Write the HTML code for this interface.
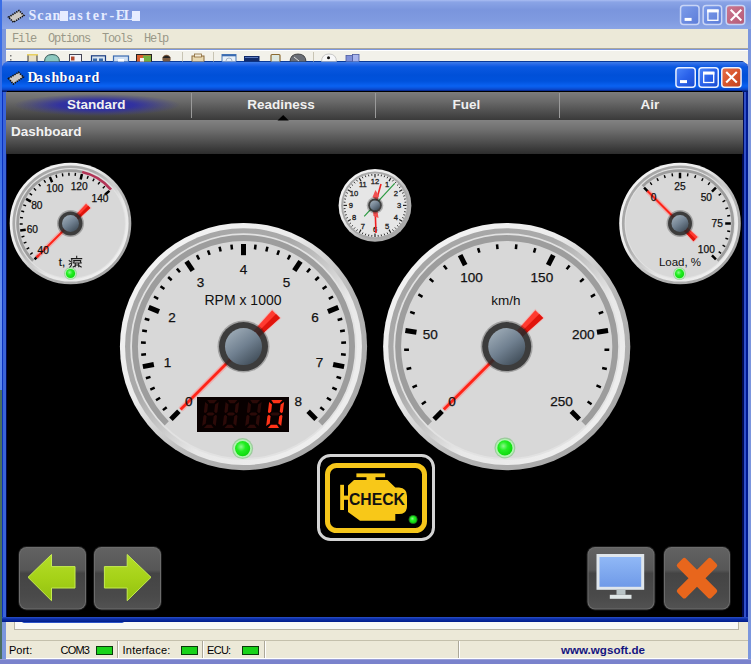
<!DOCTYPE html>
<html><head><meta charset="utf-8">
<style>
*{margin:0;padding:0;box-sizing:border-box}
html,body{width:751px;height:664px;overflow:hidden;background:#7b96dd}
body{position:relative;font-family:"Liberation Sans",sans-serif}
.abs{position:absolute}
#otitle{left:0;top:0;width:751px;height:29px;background:linear-gradient(#a9bdf2 0,#8aa4e6 2px,#7a95dd 10px,#7f9ae0 20px,#8ba5e6 29px)}
#ttext{left:28.5px;top:9px;font-family:"Liberation Serif",serif;font-weight:bold;font-size:14px;color:#e6ecff;letter-spacing:0;white-space:pre;line-height:14px}
.blk{display:inline-block;width:7.95px;height:10px;border-left:0.5px solid transparent;background-clip:content-box;background:#e6ecff;vertical-align:-1px}
#menu{left:6px;top:29px;width:742px;height:20px;background:#ece9d8;border-bottom:1px solid #aca899}
#mtext{left:12px;top:32px;font-family:"Liberation Mono",monospace;font-size:12px;letter-spacing:-1.2px;color:#9a9888;white-space:pre;line-height:14px}
#tool{left:6px;top:50px;width:742px;height:14px;background:#f2f1ea;border-top:1px solid #fff}
#dash{left:2px;top:61px;width:746px;height:561px;background:linear-gradient(90deg,#0a30c0 0,#0a30c0 1.5px,#3a64d8 1.5px,#3a64d8 4px,#000a50 4px,#000a50 5px,#3a64d8 5px,#3a64d8 739.5px,#000a50 739.5px,#000a50 742px,#3050c8 742px,#3050c8 744px,#001a90 744px);border-radius:8px 8px 0 0}
#dbot{left:2px;top:617px;width:746px;height:5px;background:linear-gradient(#2a50c8 0,#0c2ea8 2px,#001c88 5px)}
#dtitle{left:2px;top:61px;width:746px;height:31px;border-radius:8px 8px 0 0;background:linear-gradient(#0a3a9a 0,#0a3a9a 1px,#3a7ae8 1.5px,#2a6ae8 3px,#0a58e0 6px,#0050d8 14px,#0052dc 20px,#0a62f2 25px,#0a56e0 27px,#0a40c0 29px,#001a70 30px,#001a70 31px)}
#dtt{left:27.5px;top:71px;font-family:"Liberation Serif",serif;font-weight:bold;font-size:14px;color:#fff;white-space:pre;line-height:14px;text-shadow:1px 1px 0 #0a2a90}
#content{left:7px;top:91px;width:734.5px;height:526px;background:#000;overflow:hidden}
#tabs{left:6px;top:92px;width:737px;height:28px;background:linear-gradient(#7c7c7c 0,#6a6a6a 9px,#4e4e4e 20px,#3a3a3a 28px)}
.sep{top:93px;width:1px;height:25px;background:#9a9a9a}
.tab{top:98px;height:14px;white-space:nowrap;font-weight:bold;font-size:13.5px;color:#f0f0f0;line-height:14px}
#glow{left:14px;top:94px;width:166px;height:22px;border-radius:50%;background:radial-gradient(ellipse closest-side at center,rgba(38,38,175,0.95) 0,rgba(42,42,170,0.85) 45%,rgba(55,55,150,0.35) 80%,rgba(60,60,150,0) 100%)}
#hdr{left:6px;top:120px;width:737px;height:34px;background:linear-gradient(#828282 0,#6e6e6e 10px,#4e4e4e 22px,#2c2c2c 34px)}
#htext{left:11px;top:125px;font-weight:bold;font-size:13.5px;color:#f2f2f2;line-height:14px}
#below{left:6px;top:622px;width:742px;height:37px;background:#ece9d8}
#wpanel{left:14px;top:621px;width:725px;height:9px;background:#f8f8f6;border:1px solid #b8b4a4;border-top:none}
#status{left:6px;top:640px;width:742px;height:19px;background:#ece9d8;border-top:1px solid #c4c0ac;border-bottom:1px solid #fff}
.st{top:644px;font-size:11px;color:#000;line-height:12px;white-space:pre}
.gbox{top:646px;width:17px;height:9px;background:#19d219;border:1px solid #0a3a0a}
.vsep{top:641px;width:2px;height:17px;border-left:1px solid #aca899;border-right:1px solid #fff}
#bottom{left:0;top:659px;width:751px;height:5px;background:#7a82cc;border-top:1px solid #9aa0d8}
svg{position:absolute;left:0;top:0}
</style></head><body>
<div class="abs" id="otitle"></div>
<div class="abs" style="left:0;top:0;width:2px;height:390px;background:linear-gradient(#3a6ee6 0,#3a6ee6 150px,#6a92ee 300px,#5a86ec 390px)"></div>
<div class="abs" style="left:0;top:390px;width:2px;height:274px;background:#4a7060"></div>
<div class="abs" id="ttext"><span style="display:inline-block;width:7.95px;text-align:center">S</span><span style="display:inline-block;width:7.95px;text-align:center">c</span><span style="display:inline-block;width:7.95px;text-align:center">a</span><span style="display:inline-block;width:7.95px;text-align:center">n</span><span class="blk"></span><span style="display:inline-block;width:7.95px;text-align:center">a</span><span style="display:inline-block;width:7.95px;text-align:center">s</span><span style="display:inline-block;width:7.95px;text-align:center">t</span><span style="display:inline-block;width:7.95px;text-align:center">e</span><span style="display:inline-block;width:7.95px;text-align:center">r</span><span style="display:inline-block;width:7.95px;text-align:center">-</span><span style="display:inline-block;width:7.95px;text-align:center">E</span><span style="display:inline-block;width:7.95px;text-align:center">L</span><span class="blk"></span></div>
<div class="abs" id="menu"></div>
<div class="abs" id="mtext">File  Options  Tools  Help</div>
<div class="abs" id="tool"></div>
<div class="abs" id="below"></div>
<div class="abs" id="wpanel"></div>
<div class="abs" id="status"></div>
<div class="abs st" style="left:9px">Port:</div>
<div class="abs st" style="left:60.5px;letter-spacing:-0.8px">COM3</div>
<div class="abs gbox" style="left:96px"></div>
<div class="abs vsep" style="left:117px"></div>
<div class="abs st" style="left:122.6px;letter-spacing:0.2px">Interface:</div>
<div class="abs gbox" style="left:181px"></div>
<div class="abs vsep" style="left:202px"></div>
<div class="abs st" style="left:207px;letter-spacing:-0.7px">ECU:</div>
<div class="abs gbox" style="left:242px"></div>
<div class="abs vsep" style="left:264px"></div>
<div class="abs vsep" style="left:458px"></div>
<div class="abs st" style="left:561px;font-weight:bold;color:#141480;font-size:11.6px">www.wgsoft.de</div>
<div class="abs" id="bottom"></div>
<div class="abs" style="left:22px;top:620px;width:102px;height:3px;background:#2a52c8;border-radius:0 0 2px 2px"></div>
<div class="abs" id="dash"></div>
<div class="abs" id="dbot"></div>
<div class="abs" id="dtitle"></div>
<div class="abs" id="dtt"><span style="display:inline-block;width:8.0px;text-align:center">D</span><span style="display:inline-block;width:8.0px;text-align:center">a</span><span style="display:inline-block;width:8.0px;text-align:center">s</span><span style="display:inline-block;width:8.0px;text-align:center">h</span><span style="display:inline-block;width:8.0px;text-align:center">b</span><span style="display:inline-block;width:8.0px;text-align:center">o</span><span style="display:inline-block;width:8.0px;text-align:center">a</span><span style="display:inline-block;width:8.0px;text-align:center">r</span><span style="display:inline-block;width:8.0px;text-align:center">d</span></div>
<div class="abs" id="content"></div>
<div class="abs" id="tabs"></div>
<div class="abs" id="glow"></div>
<div class="abs sep" style="left:191px"></div>
<div class="abs sep" style="left:375px"></div>
<div class="abs sep" style="left:559px"></div>
<div class="abs tab" style="left:67px">Standard</div>
<div class="abs tab" style="left:247.3px">Readiness</div>
<div class="abs tab" style="left:452.4px">Fuel</div>
<div class="abs tab" style="left:640.5px">Air</div>
<div class="abs" id="hdr"></div>
<div class="abs" id="htext">Dashboard</div>
<svg width="751" height="664" viewBox="0 0 751 664" font-family="Liberation Sans, sans-serif">
<defs>
<linearGradient id="rimA" x1="0" y1="0" x2="1" y2="1"><stop offset="0" stop-color="#f6f6f6"/><stop offset="0.38" stop-color="#ececec"/><stop offset="0.62" stop-color="#b4b4b4"/><stop offset="1" stop-color="#a2a2a2"/></linearGradient>
<linearGradient id="rimB" x1="0" y1="0" x2="1" y2="1"><stop offset="0" stop-color="#a4a4a4"/><stop offset="0.38" stop-color="#aaaaaa"/><stop offset="0.62" stop-color="#e8e8e8"/><stop offset="1" stop-color="#f2f2f2"/></linearGradient>
<linearGradient id="ball" x1="0.2" y1="0.1" x2="0.8" y2="0.9"><stop offset="0" stop-color="#98a6b2"/><stop offset="0.5" stop-color="#708090"/><stop offset="1" stop-color="#45525e"/></linearGradient>
<linearGradient id="btn" x1="0" y1="0" x2="0" y2="1"><stop offset="0" stop-color="#626262"/><stop offset="0.36" stop-color="#575757"/><stop offset="0.42" stop-color="#444444"/><stop offset="0.8" stop-color="#4a4a4a"/><stop offset="1" stop-color="#525252"/></linearGradient>
<linearGradient id="arr" x1="0" y1="0" x2="0" y2="1"><stop offset="0" stop-color="#b4de2a"/><stop offset="0.5" stop-color="#a6d218"/><stop offset="1" stop-color="#92c010"/></linearGradient>
<linearGradient id="scr" x1="0" y1="0" x2="0" y2="1"><stop offset="0" stop-color="#90b8f6"/><stop offset="1" stop-color="#6f9ae8"/></linearGradient>
<linearGradient id="wbA" x1="0" y1="0" x2="1" y2="1"><stop offset="0" stop-color="#4c86fa"/><stop offset="0.5" stop-color="#2a62ea"/><stop offset="1" stop-color="#1a4cd0"/></linearGradient>
<linearGradient id="wbX" x1="0" y1="0" x2="1" y2="1"><stop offset="0" stop-color="#e8704a"/><stop offset="0.5" stop-color="#d8552c"/><stop offset="1" stop-color="#c04020"/></linearGradient>
<linearGradient id="wbI" x1="0" y1="0" x2="1" y2="1"><stop offset="0" stop-color="#7c9cea"/><stop offset="1" stop-color="#5c7cd8"/></linearGradient>
<linearGradient id="wbIX" x1="0" y1="0" x2="1" y2="1"><stop offset="0" stop-color="#cc7890"/><stop offset="1" stop-color="#b45a76"/></linearGradient>
<radialGradient id="ledg" cx="0.4" cy="0.38" r="0.65"><stop offset="0" stop-color="#8cf88c"/><stop offset="0.45" stop-color="#22ee22"/><stop offset="1" stop-color="#0cd80c"/></radialGradient>
</defs>
<polygon points="277.5,120.5 283.2,115 288.8,120.5" fill="#000"/>
<clipPath id="tbclip"><rect x="0" y="50" width="751" height="11.4"/></clipPath><g clip-path="url(#tbclip)"><rect x="10" y="55" width="1.5" height="1.5" fill="#777"/><rect x="10" y="59" width="1.5" height="1.5" fill="#777"/><rect x="28" y="54.5" width="9" height="8" fill="#e8e0c8" stroke="#333" stroke-width="1"/><rect x="27" y="54" width="11" height="1.5" fill="#e8d060"/><path d="M44.5,62 Q44.5,54.5 52,54.5 Q59.5,54.5 59.5,62 Z" fill="#8cc8c0" stroke="#355" stroke-width="1"/><rect x="69.5" y="54.5" width="12" height="8" fill="#f4f4f8" stroke="#445" stroke-width="1"/><rect x="71" y="56.5" width="3.5" height="4" fill="#b04830"/><rect x="91.5" y="55.8" width="14" height="6" fill="#d8e4f0" stroke="#1a3c80" stroke-width="1.2"/><rect x="93" y="58.5" width="4" height="3" fill="#3a6aa8"/><rect x="99" y="58.5" width="4" height="3" fill="#3a6aa8"/><rect x="113.5" y="56" width="15" height="6" fill="#cfe0f4" stroke="#3a6ab0" stroke-width="1.2"/><rect x="118" y="59" width="6" height="3" fill="#fff"/><rect x="136.5" y="54.5" width="15" height="8" fill="#d86030" stroke="#222" stroke-width="1"/><rect x="143" y="55.5" width="8" height="7" fill="#70b040"/><rect x="140" y="58" width="4" height="4" fill="#f0f0f0"/><circle cx="166.5" cy="59" r="4.2" fill="#7a5a40"/><path d="M162.3,58 Q166.5,53.5 170.7,58 Z" fill="#222"/><rect x="182" y="52" width="1" height="10" fill="#c8c4b4"/><rect x="192" y="56" width="12" height="6" fill="#e8d8b0" stroke="#8a6a3a" stroke-width="1"/><rect x="194.5" y="54" width="7" height="3" fill="#f4ecd8" stroke="#8a6a3a" stroke-width="0.8"/><rect x="213" y="52" width="1" height="10" fill="#c8c4b4"/><rect x="222" y="54.5" width="14" height="8" fill="#e8f0f8" stroke="#4a7ab8" stroke-width="1"/><rect x="222" y="54.5" width="14" height="1.8" fill="#3a6ab0"/><circle cx="229" cy="61" r="3" fill="none" stroke="#9ab" stroke-width="0.8"/><rect x="244" y="56" width="15.5" height="6" fill="#102a6a"/><rect x="245" y="57" width="13" height="1" fill="#5a7ac0"/><rect x="271" y="54.5" width="9" height="8" rx="1" fill="#dce8e0" stroke="#8a6a30" stroke-width="1.2"/><path d="M290,62 Q290,54 298,54 Q306,54 306,62 Z" fill="#6a6e76" stroke="#333" stroke-width="0.8"/><line x1="294" y1="57" x2="299" y2="61" stroke="#ddd" stroke-width="1"/><rect x="313" y="52" width="1" height="10" fill="#c8c4b4"/><path d="M321.5,62 Q321.5,54 329,54 Q336.5,54 336.5,62 Z" fill="#f8f8f8" stroke="#bbb" stroke-width="0.8"/><circle cx="328.5" cy="57.8" r="1.5" fill="#111"/><rect x="346" y="55.5" width="6.5" height="7" fill="#8090d8" stroke="#4a5aa0" stroke-width="0.8"/><rect x="352.5" y="54.5" width="6.5" height="8" fill="#a8b4ec" stroke="#4a5aa0" stroke-width="0.8"/></g>
<circle cx="70.5" cy="223.5" r="60.8" fill="url(#rimA)"/>
<circle cx="70.5" cy="223.5" r="58.099999999999994" fill="url(#rimB)"/>
<circle cx="70.5" cy="223.5" r="55.4" fill="#e2e2e2"/>
<circle cx="70.5" cy="223.5" r="54.428" fill="#d8d8d8"/>
<path d="M33.16,260.84 A52.8,52.8 0 0 1 82.15,172.00" fill="none" stroke="#9d9d9d" stroke-width="2.8"/>
<path d="M82.15,172.00 A52.8,52.8 0 0 1 110.95,189.56" fill="none" stroke="#b23355" stroke-width="2.8"/>
<line x1="34.58" y1="259.42" x2="38.54" y2="255.46" stroke="#000" stroke-width="2.5"/>
<line x1="30.25" y1="254.50" x2="32.63" y2="252.66" stroke="#000" stroke-width="1.4"/>
<line x1="26.59" y1="249.05" x2="29.19" y2="247.54" stroke="#000" stroke-width="1.4"/>
<line x1="23.67" y1="243.19" x2="26.43" y2="242.02" stroke="#000" stroke-width="1.4"/>
<line x1="21.52" y1="236.99" x2="24.42" y2="236.19" stroke="#000" stroke-width="1.4"/>
<line x1="20.19" y1="230.57" x2="25.74" y2="229.79" stroke="#000" stroke-width="2.5"/>
<line x1="19.70" y1="224.03" x2="22.70" y2="224.00" stroke="#000" stroke-width="1.4"/>
<line x1="20.06" y1="217.49" x2="23.04" y2="217.84" stroke="#000" stroke-width="1.4"/>
<line x1="21.25" y1="211.04" x2="24.16" y2="211.77" stroke="#000" stroke-width="1.4"/>
<line x1="23.27" y1="204.80" x2="26.06" y2="205.90" stroke="#000" stroke-width="1.4"/>
<line x1="26.07" y1="198.87" x2="30.97" y2="201.59" stroke="#000" stroke-width="2.5"/>
<line x1="29.61" y1="193.35" x2="32.03" y2="195.13" stroke="#000" stroke-width="1.4"/>
<line x1="33.83" y1="188.34" x2="36.00" y2="190.42" stroke="#000" stroke-width="1.4"/>
<line x1="38.67" y1="183.91" x2="40.55" y2="186.25" stroke="#000" stroke-width="1.4"/>
<line x1="44.03" y1="180.14" x2="45.60" y2="182.70" stroke="#000" stroke-width="1.4"/>
<line x1="49.84" y1="177.09" x2="52.12" y2="182.21" stroke="#000" stroke-width="2.5"/>
<line x1="55.99" y1="174.82" x2="56.84" y2="177.69" stroke="#000" stroke-width="1.4"/>
<line x1="62.38" y1="173.35" x2="62.86" y2="176.31" stroke="#000" stroke-width="1.4"/>
<line x1="68.90" y1="172.73" x2="69.00" y2="175.72" stroke="#000" stroke-width="1.4"/>
<line x1="75.46" y1="172.94" x2="75.16" y2="175.93" stroke="#000" stroke-width="1.4"/>
<line x1="81.93" y1="174.00" x2="80.67" y2="179.46" stroke="#000" stroke-width="2.5"/>
<line x1="88.21" y1="175.89" x2="87.16" y2="178.70" stroke="#000" stroke-width="1.4"/>
<line x1="94.19" y1="178.56" x2="92.79" y2="181.22" stroke="#000" stroke-width="1.4"/>
<line x1="99.78" y1="181.99" x2="98.05" y2="184.44" stroke="#000" stroke-width="1.4"/>
<line x1="104.89" y1="186.11" x2="102.85" y2="188.31" stroke="#000" stroke-width="1.4"/>
<line x1="109.42" y1="190.85" x2="105.13" y2="194.45" stroke="#000" stroke-width="2.5"/>
<circle cx="680" cy="223.5" r="60.8" fill="url(#rimA)"/>
<circle cx="680" cy="223.5" r="58.099999999999994" fill="url(#rimB)"/>
<circle cx="680" cy="223.5" r="55.4" fill="#e2e2e2"/>
<circle cx="680" cy="223.5" r="54.428" fill="#d8d8d8"/>
<path d="M642.66,186.16 A52.8,52.8 0 0 1 717.34,260.84" fill="none" stroke="#9d9d9d" stroke-width="2.8"/>
<line x1="644.08" y1="187.58" x2="648.04" y2="191.54" stroke="#000" stroke-width="2.5"/>
<line x1="650.14" y1="182.40" x2="651.90" y2="184.83" stroke="#000" stroke-width="1.4"/>
<line x1="656.94" y1="178.24" x2="658.30" y2="180.91" stroke="#000" stroke-width="1.4"/>
<line x1="664.30" y1="175.19" x2="665.23" y2="178.04" stroke="#000" stroke-width="1.4"/>
<line x1="672.05" y1="173.33" x2="672.52" y2="176.29" stroke="#000" stroke-width="1.4"/>
<line x1="680.00" y1="172.70" x2="680.00" y2="178.30" stroke="#000" stroke-width="2.5"/>
<line x1="687.95" y1="173.33" x2="687.48" y2="176.29" stroke="#000" stroke-width="1.4"/>
<line x1="695.70" y1="175.19" x2="694.77" y2="178.04" stroke="#000" stroke-width="1.4"/>
<line x1="703.06" y1="178.24" x2="701.70" y2="180.91" stroke="#000" stroke-width="1.4"/>
<line x1="709.86" y1="182.40" x2="708.10" y2="184.83" stroke="#000" stroke-width="1.4"/>
<line x1="715.92" y1="187.58" x2="711.96" y2="191.54" stroke="#000" stroke-width="2.5"/>
<line x1="721.10" y1="193.64" x2="718.67" y2="195.40" stroke="#000" stroke-width="1.4"/>
<line x1="725.26" y1="200.44" x2="722.59" y2="201.80" stroke="#000" stroke-width="1.4"/>
<line x1="728.31" y1="207.80" x2="725.46" y2="208.73" stroke="#000" stroke-width="1.4"/>
<line x1="730.17" y1="215.55" x2="727.21" y2="216.02" stroke="#000" stroke-width="1.4"/>
<line x1="730.80" y1="223.50" x2="725.20" y2="223.50" stroke="#000" stroke-width="2.5"/>
<line x1="730.17" y1="231.45" x2="727.21" y2="230.98" stroke="#000" stroke-width="1.4"/>
<line x1="728.31" y1="239.20" x2="725.46" y2="238.27" stroke="#000" stroke-width="1.4"/>
<line x1="725.26" y1="246.56" x2="722.59" y2="245.20" stroke="#000" stroke-width="1.4"/>
<line x1="721.10" y1="253.36" x2="718.67" y2="251.60" stroke="#000" stroke-width="1.4"/>
<line x1="715.92" y1="259.42" x2="711.96" y2="255.46" stroke="#000" stroke-width="2.5"/>
<circle cx="243.5" cy="346.6" r="123.6" fill="url(#rimA)"/>
<circle cx="243.5" cy="346.6" r="118.44999999999999" fill="url(#rimB)"/>
<circle cx="243.5" cy="346.6" r="113.3" fill="#e2e2e2"/>
<circle cx="243.5" cy="346.6" r="111.446" fill="#d8d8d8"/>
<path d="M166.74,423.36 A108.55,108.55 0 1 1 320.26,423.36" fill="none" stroke="#9d9d9d" stroke-width="5.9"/>
<line x1="170.95" y1="419.15" x2="178.87" y2="411.23" stroke="#000" stroke-width="5"/>
<line x1="162.93" y1="410.12" x2="166.70" y2="407.15" stroke="#000" stroke-width="2.5"/>
<line x1="156.02" y1="400.21" x2="160.11" y2="397.70" stroke="#000" stroke-width="2.5"/>
<line x1="150.32" y1="389.55" x2="154.68" y2="387.54" stroke="#000" stroke-width="2.5"/>
<line x1="145.92" y1="378.31" x2="150.49" y2="376.82" stroke="#000" stroke-width="2.5"/>
<line x1="142.87" y1="366.62" x2="153.86" y2="364.43" stroke="#000" stroke-width="5"/>
<line x1="141.22" y1="354.65" x2="146.00" y2="354.27" stroke="#000" stroke-width="2.5"/>
<line x1="140.98" y1="342.57" x2="145.78" y2="342.76" stroke="#000" stroke-width="2.5"/>
<line x1="142.16" y1="330.55" x2="146.90" y2="331.30" stroke="#000" stroke-width="2.5"/>
<line x1="144.75" y1="318.75" x2="149.37" y2="320.05" stroke="#000" stroke-width="2.5"/>
<line x1="148.71" y1="307.34" x2="159.06" y2="311.62" stroke="#000" stroke-width="5"/>
<line x1="153.98" y1="296.47" x2="158.17" y2="298.81" stroke="#000" stroke-width="2.5"/>
<line x1="160.49" y1="286.29" x2="164.38" y2="289.11" stroke="#000" stroke-width="2.5"/>
<line x1="168.16" y1="276.96" x2="171.68" y2="280.21" stroke="#000" stroke-width="2.5"/>
<line x1="176.87" y1="268.58" x2="179.98" y2="272.23" stroke="#000" stroke-width="2.5"/>
<line x1="186.50" y1="261.29" x2="192.72" y2="270.60" stroke="#000" stroke-width="5"/>
<line x1="196.92" y1="255.18" x2="199.10" y2="259.46" stroke="#000" stroke-width="2.5"/>
<line x1="207.99" y1="250.34" x2="209.65" y2="254.84" stroke="#000" stroke-width="2.5"/>
<line x1="219.55" y1="246.83" x2="220.67" y2="251.50" stroke="#000" stroke-width="2.5"/>
<line x1="231.44" y1="244.71" x2="232.00" y2="249.48" stroke="#000" stroke-width="2.5"/>
<line x1="243.50" y1="244.00" x2="243.50" y2="255.20" stroke="#000" stroke-width="5"/>
<line x1="255.56" y1="244.71" x2="255.00" y2="249.48" stroke="#000" stroke-width="2.5"/>
<line x1="267.45" y1="246.83" x2="266.33" y2="251.50" stroke="#000" stroke-width="2.5"/>
<line x1="279.01" y1="250.34" x2="277.35" y2="254.84" stroke="#000" stroke-width="2.5"/>
<line x1="290.08" y1="255.18" x2="287.90" y2="259.46" stroke="#000" stroke-width="2.5"/>
<line x1="300.50" y1="261.29" x2="294.28" y2="270.60" stroke="#000" stroke-width="5"/>
<line x1="310.13" y1="268.58" x2="307.02" y2="272.23" stroke="#000" stroke-width="2.5"/>
<line x1="318.84" y1="276.96" x2="315.32" y2="280.21" stroke="#000" stroke-width="2.5"/>
<line x1="326.51" y1="286.29" x2="322.62" y2="289.11" stroke="#000" stroke-width="2.5"/>
<line x1="333.02" y1="296.47" x2="328.83" y2="298.81" stroke="#000" stroke-width="2.5"/>
<line x1="338.29" y1="307.34" x2="327.94" y2="311.62" stroke="#000" stroke-width="5"/>
<line x1="342.25" y1="318.75" x2="337.63" y2="320.05" stroke="#000" stroke-width="2.5"/>
<line x1="344.84" y1="330.55" x2="340.10" y2="331.30" stroke="#000" stroke-width="2.5"/>
<line x1="346.02" y1="342.57" x2="341.22" y2="342.76" stroke="#000" stroke-width="2.5"/>
<line x1="345.78" y1="354.65" x2="341.00" y2="354.27" stroke="#000" stroke-width="2.5"/>
<line x1="344.13" y1="366.62" x2="333.14" y2="364.43" stroke="#000" stroke-width="5"/>
<line x1="341.08" y1="378.31" x2="336.51" y2="376.82" stroke="#000" stroke-width="2.5"/>
<line x1="336.68" y1="389.55" x2="332.32" y2="387.54" stroke="#000" stroke-width="2.5"/>
<line x1="330.98" y1="400.21" x2="326.89" y2="397.70" stroke="#000" stroke-width="2.5"/>
<line x1="324.07" y1="410.12" x2="320.30" y2="407.15" stroke="#000" stroke-width="2.5"/>
<line x1="316.05" y1="419.15" x2="308.13" y2="411.23" stroke="#000" stroke-width="5"/>
<circle cx="506.7" cy="346.6" r="123.6" fill="url(#rimA)"/>
<circle cx="506.7" cy="346.6" r="118.44999999999999" fill="url(#rimB)"/>
<circle cx="506.7" cy="346.6" r="113.3" fill="#e2e2e2"/>
<circle cx="506.7" cy="346.6" r="111.446" fill="#d8d8d8"/>
<path d="M429.94,423.36 A108.55,108.55 0 1 1 583.46,423.36" fill="none" stroke="#9d9d9d" stroke-width="5.9"/>
<line x1="434.15" y1="419.15" x2="442.07" y2="411.23" stroke="#000" stroke-width="5"/>
<line x1="421.84" y1="404.27" x2="425.81" y2="401.57" stroke="#000" stroke-width="2.5"/>
<line x1="412.54" y1="387.35" x2="416.94" y2="385.44" stroke="#000" stroke-width="2.5"/>
<line x1="406.57" y1="368.98" x2="411.26" y2="367.93" stroke="#000" stroke-width="2.5"/>
<line x1="404.15" y1="349.82" x2="408.95" y2="349.67" stroke="#000" stroke-width="2.5"/>
<line x1="405.36" y1="330.55" x2="416.43" y2="332.30" stroke="#000" stroke-width="5"/>
<line x1="410.17" y1="311.85" x2="414.68" y2="313.47" stroke="#000" stroke-width="2.5"/>
<line x1="418.39" y1="294.37" x2="422.52" y2="296.82" stroke="#000" stroke-width="2.5"/>
<line x1="429.74" y1="278.75" x2="433.34" y2="281.92" stroke="#000" stroke-width="2.5"/>
<line x1="443.82" y1="265.53" x2="446.76" y2="269.32" stroke="#000" stroke-width="2.5"/>
<line x1="460.12" y1="255.18" x2="465.21" y2="265.16" stroke="#000" stroke-width="5"/>
<line x1="478.08" y1="248.07" x2="479.41" y2="252.68" stroke="#000" stroke-width="2.5"/>
<line x1="497.04" y1="244.46" x2="497.50" y2="249.23" stroke="#000" stroke-width="2.5"/>
<line x1="516.36" y1="244.46" x2="515.90" y2="249.23" stroke="#000" stroke-width="2.5"/>
<line x1="535.32" y1="248.07" x2="533.99" y2="252.68" stroke="#000" stroke-width="2.5"/>
<line x1="553.28" y1="255.18" x2="548.19" y2="265.16" stroke="#000" stroke-width="5"/>
<line x1="569.58" y1="265.53" x2="566.64" y2="269.32" stroke="#000" stroke-width="2.5"/>
<line x1="583.66" y1="278.75" x2="580.06" y2="281.92" stroke="#000" stroke-width="2.5"/>
<line x1="595.01" y1="294.37" x2="590.88" y2="296.82" stroke="#000" stroke-width="2.5"/>
<line x1="603.23" y1="311.85" x2="598.72" y2="313.47" stroke="#000" stroke-width="2.5"/>
<line x1="608.04" y1="330.55" x2="596.97" y2="332.30" stroke="#000" stroke-width="5"/>
<line x1="609.25" y1="349.82" x2="604.45" y2="349.67" stroke="#000" stroke-width="2.5"/>
<line x1="606.83" y1="368.98" x2="602.14" y2="367.93" stroke="#000" stroke-width="2.5"/>
<line x1="600.86" y1="387.35" x2="596.46" y2="385.44" stroke="#000" stroke-width="2.5"/>
<line x1="591.56" y1="404.27" x2="587.59" y2="401.57" stroke="#000" stroke-width="2.5"/>
<line x1="579.25" y1="419.15" x2="571.33" y2="411.23" stroke="#000" stroke-width="5"/>
<line x1="70.5" y1="223.5" x2="36.56" y2="257.44" stroke="#ff8a8a" stroke-width="5" opacity="0.5"/>
<line x1="70.5" y1="223.5" x2="36.56" y2="257.44" stroke="#ff2418" stroke-width="2"/>
<polygon points="71.91,224.91 90.30,207.94 86.06,203.70 69.09,222.09" fill="#ff8888" opacity="0.5" stroke="#ff9a9a" stroke-width="2"/>
<polygon points="71.91,224.91 90.30,207.94 86.06,203.70 69.09,222.09" fill="#ff3a30"/>
<polygon points="70.50,223.50 88.18,205.82 90.30,207.94 71.91,224.91" fill="#e0140c"/>
<circle cx="70.5" cy="223.5" r="13.5" fill="rgba(0,0,0,0.25)"/><circle cx="70.5" cy="223.5" r="12" fill="#2a2a2a" fill-opacity="0.85"/><circle cx="70.5" cy="223.5" r="8.5" fill="url(#ball)"/>
<circle cx="70.5" cy="273.5" r="6.347999999999999" fill="#6cc06c" opacity="0.55"/><circle cx="70.5" cy="273.5" r="5.611999999999999" fill="#b4f2b4"/><circle cx="70.5" cy="273.5" r="4.6" fill="url(#ledg)"/>
<line x1="680" y1="223.5" x2="647.47" y2="190.97" stroke="#ff8a8a" stroke-width="5" opacity="0.5"/>
<line x1="680" y1="223.5" x2="647.47" y2="190.97" stroke="#ff2418" stroke-width="2"/>
<polygon points="678.59,224.91 693.44,241.18 697.68,236.94 681.41,222.09" fill="#ff8888" opacity="0.5" stroke="#ff9a9a" stroke-width="2"/>
<polygon points="678.59,224.91 693.44,241.18 697.68,236.94 681.41,222.09" fill="#ff3a30"/>
<polygon points="680.00,223.50 695.56,239.06 693.44,241.18 678.59,224.91" fill="#e0140c"/>
<circle cx="680" cy="223.5" r="13.5" fill="rgba(0,0,0,0.25)"/><circle cx="680" cy="223.5" r="12" fill="#2a2a2a" fill-opacity="0.85"/><circle cx="680" cy="223.5" r="8.5" fill="url(#ball)"/>
<circle cx="679.5" cy="273.7" r="6.347999999999999" fill="#6cc06c" opacity="0.55"/><circle cx="679.5" cy="273.7" r="5.611999999999999" fill="#b4f2b4"/><circle cx="679.5" cy="273.7" r="4.6" fill="url(#ledg)"/>
<text x="680" y="265.5" font-size="11.5" text-anchor="middle" fill="#111">Load, %</text>
<text x="58.8" y="266" font-size="11.5" fill="#111" stroke="#111" stroke-width="0.2">t,</text>
<text x="243" y="305" font-size="14" text-anchor="middle" fill="#111">RPM x 1000</text>
<line x1="243.5" y1="346.6" x2="180.57" y2="409.53" stroke="#ff8a8a" stroke-width="5.8" opacity="0.5"/>
<line x1="243.5" y1="346.6" x2="180.57" y2="409.53" stroke="#ff2418" stroke-width="2.8"/>
<polygon points="245.62,348.72 279.92,317.96 272.14,310.18 241.38,344.48" fill="#ff8888" opacity="0.5" stroke="#ff9a9a" stroke-width="2"/>
<polygon points="245.62,348.72 279.92,317.96 272.14,310.18 241.38,344.48" fill="#ff3a30"/>
<polygon points="243.50,346.60 276.03,314.07 279.92,317.96 245.62,348.72" fill="#e0140c"/>
<circle cx="243.5" cy="346.6" r="26.0" fill="rgba(0,0,0,0.25)"/><circle cx="243.5" cy="346.6" r="24.5" fill="#2a2a2a" fill-opacity="0.85"/><circle cx="243.5" cy="346.6" r="18.5" fill="url(#ball)"/>
<circle cx="242.6" cy="448.6" r="10.488" fill="#6cc06c" opacity="0.55"/><circle cx="242.6" cy="448.6" r="9.272" fill="#b4f2b4"/><circle cx="242.6" cy="448.6" r="7.6" fill="url(#ledg)"/>
<text x="506" y="305" font-size="13.5" text-anchor="middle" fill="#111">km/h</text>
<line x1="506.7" y1="346.6" x2="443.77" y2="409.53" stroke="#ff8a8a" stroke-width="5.8" opacity="0.5"/>
<line x1="506.7" y1="346.6" x2="443.77" y2="409.53" stroke="#ff2418" stroke-width="2.8"/>
<polygon points="508.82,348.72 543.12,317.96 535.34,310.18 504.58,344.48" fill="#ff8888" opacity="0.5" stroke="#ff9a9a" stroke-width="2"/>
<polygon points="508.82,348.72 543.12,317.96 535.34,310.18 504.58,344.48" fill="#ff3a30"/>
<polygon points="506.70,346.60 539.23,314.07 543.12,317.96 508.82,348.72" fill="#e0140c"/>
<circle cx="506.7" cy="346.6" r="26.0" fill="rgba(0,0,0,0.25)"/><circle cx="506.7" cy="346.6" r="24.5" fill="#2a2a2a" fill-opacity="0.85"/><circle cx="506.7" cy="346.6" r="18.5" fill="url(#ball)"/>
<circle cx="504.9" cy="447.9" r="10.488" fill="#6cc06c" opacity="0.55"/><circle cx="504.9" cy="447.9" r="9.272" fill="#b4f2b4"/><circle cx="504.9" cy="447.9" r="7.6" fill="url(#ledg)"/>
<rect x="197" y="397" width="92" height="35" fill="#080000"/>
<polygon points="207.28,400.00 216.94,400.00 214.00,403.20 209.46,403.20" fill="#2c0a08"/><polygon points="206.86,424.80 211.40,424.80 213.58,428.00 203.92,428.00" fill="#2c0a08"/><polygon points="206.24,414.00 208.35,412.40 212.89,412.40 214.62,414.00 212.51,415.60 207.97,415.60" fill="#2c0a08"/><polygon points="205.13,401.92 208.02,404.48 207.15,411.76 205.04,413.36 203.91,412.08" fill="#2c0a08"/><polygon points="203.45,415.92 204.88,414.64 206.61,416.24 205.74,423.52 202.23,426.08" fill="#2c0a08"/><polygon points="218.63,401.92 217.41,412.08 215.98,413.36 214.25,411.76 215.12,404.48" fill="#2c0a08"/><polygon points="216.95,415.92 215.73,426.08 212.84,423.52 213.71,416.24 215.82,414.64" fill="#2c0a08"/>
<polygon points="227.78,400.00 237.44,400.00 234.50,403.20 229.96,403.20" fill="#2c0a08"/><polygon points="227.36,424.80 231.90,424.80 234.08,428.00 224.42,428.00" fill="#2c0a08"/><polygon points="226.74,414.00 228.85,412.40 233.39,412.40 235.12,414.00 233.01,415.60 228.47,415.60" fill="#2c0a08"/><polygon points="225.63,401.92 228.52,404.48 227.65,411.76 225.54,413.36 224.41,412.08" fill="#2c0a08"/><polygon points="223.95,415.92 225.38,414.64 227.11,416.24 226.24,423.52 222.73,426.08" fill="#2c0a08"/><polygon points="239.13,401.92 237.91,412.08 236.48,413.36 234.75,411.76 235.62,404.48" fill="#2c0a08"/><polygon points="237.45,415.92 236.23,426.08 233.34,423.52 234.21,416.24 236.32,414.64" fill="#2c0a08"/>
<polygon points="250.28,400.00 259.94,400.00 257.00,403.20 252.46,403.20" fill="#2c0a08"/><polygon points="249.86,424.80 254.40,424.80 256.58,428.00 246.92,428.00" fill="#2c0a08"/><polygon points="249.24,414.00 251.35,412.40 255.89,412.40 257.62,414.00 255.51,415.60 250.97,415.60" fill="#2c0a08"/><polygon points="248.13,401.92 251.02,404.48 250.15,411.76 248.04,413.36 246.91,412.08" fill="#2c0a08"/><polygon points="246.45,415.92 247.88,414.64 249.61,416.24 248.74,423.52 245.23,426.08" fill="#2c0a08"/><polygon points="261.63,401.92 260.41,412.08 258.98,413.36 257.25,411.76 258.12,404.48" fill="#2c0a08"/><polygon points="259.95,415.92 258.73,426.08 255.84,423.52 256.71,416.24 258.82,414.64" fill="#2c0a08"/>
<polygon points="271.28,400.00 282.44,400.00 279.50,403.20 273.46,403.20" fill="#ff3318"/><polygon points="270.86,424.80 276.90,424.80 279.08,428.00 267.92,428.00" fill="#ff3318"/><polygon points="270.24,414.00 272.35,412.40 278.39,412.40 280.12,414.00 278.01,415.60 271.97,415.60" fill="#2c0a08"/><polygon points="269.13,401.92 272.02,404.48 271.15,411.76 269.04,413.36 267.91,412.08" fill="#ff3318"/><polygon points="267.45,415.92 268.88,414.64 270.61,416.24 269.74,423.52 266.23,426.08" fill="#ff3318"/><polygon points="284.13,401.92 282.91,412.08 281.48,413.36 279.75,411.76 280.62,404.48" fill="#ff3318"/><polygon points="282.45,415.92 281.23,426.08 278.34,423.52 279.21,416.24 281.32,414.64" fill="#ff3318"/>
<rect x="318.5" y="455.5" width="115" height="84" rx="12" fill="#000" stroke="#d4d4d4" stroke-width="3"/>
<rect x="327.5" y="465.5" width="97" height="65" rx="9" fill="none" stroke="#f6c61a" stroke-width="5"/>
<g fill="#f8c818"><rect x="356.4" y="473.4" width="28.7" height="3.8"/><rect x="366.5" y="477" width="9" height="3.5"/><path d="M354,480 H387.5 L395.3,487.5 H399 Q407,488 407,496 V506 Q407,514 399,514 H395.3 V520.7 H360 L348,512 V485.5 Z"/><rect x="340.2" y="484.8" width="3.8" height="25.2"/><rect x="343.5" y="495.6" width="5" height="4.2"/></g>
<text x="349" y="505.3" font-size="15.6" font-weight="bold" fill="#111" textLength="56" lengthAdjust="spacingAndGlyphs">CHECK</text>
<circle cx="413.1" cy="519.5" r="4.5" fill="#1a7a1a"/><circle cx="413.1" cy="519.5" r="3.5" fill="url(#ledg)"/>
<rect x="18" y="546" width="69" height="64.5" rx="8.5" fill="#1a1a1a"/><rect x="19" y="547" width="67" height="62.5" rx="7.5" fill="#6c6c6c"/><rect x="20" y="548" width="65" height="60.5" rx="6.5" fill="url(#btn)"/>
<rect x="93" y="546" width="69" height="64.5" rx="8.5" fill="#1a1a1a"/><rect x="94" y="547" width="67" height="62.5" rx="7.5" fill="#6c6c6c"/><rect x="95" y="548" width="65" height="60.5" rx="6.5" fill="url(#btn)"/>
<rect x="586.5" y="546" width="69" height="64.5" rx="8.5" fill="#1a1a1a"/><rect x="587.5" y="547" width="67" height="62.5" rx="7.5" fill="#6c6c6c"/><rect x="588.5" y="548" width="65" height="60.5" rx="6.5" fill="url(#btn)"/>
<rect x="663" y="546" width="68" height="64.5" rx="8.5" fill="#1a1a1a"/><rect x="664" y="547" width="66" height="62.5" rx="7.5" fill="#6c6c6c"/><rect x="665" y="548" width="64" height="60.5" rx="6.5" fill="url(#btn)"/>
<polygon points="28,577.3 51.5,554.5 51.5,566.6 75,566.6 75,588 51.5,588 51.5,600.7" fill="url(#arr)" stroke="#c4ec50" stroke-width="1"/>
<polygon points="151,577.3 127.2,554.5 127.2,566.6 104.4,566.6 104.4,588 127.2,588 127.2,600.7" fill="url(#arr)" stroke="#c4ec50" stroke-width="1"/>
<rect x="596.5" y="554" width="47.7" height="35.8" fill="#dfe6ec"/><rect x="599.5" y="557" width="41.7" height="29.8" fill="url(#scr)"/><rect x="616.5" y="589.8" width="9" height="5" fill="#b9c4c6"/><rect x="609.8" y="594.8" width="21.7" height="4" fill="#dfe6e6"/>
<g transform="translate(697,578.2) rotate(45)" fill="#e8661c"><rect x="-24" y="-6" width="48" height="12" rx="2.5"/><rect x="-6" y="-24" width="12" height="48" rx="2.5"/></g>
<circle cx="375" cy="205.4" r="36.4" fill="url(#rimA)"/>
<circle cx="375" cy="205.4" r="33.9" fill="#a9a9a9"/>
<circle cx="375" cy="205.4" r="31.9" fill="#e6e6e6"/>
<line x1="375.00" y1="173.90" x2="375.00" y2="177.40" stroke="#222" stroke-width="1.2"/>
<line x1="378.29" y1="174.07" x2="378.10" y2="175.86" stroke="#222" stroke-width="0.9"/>
<line x1="381.55" y1="174.59" x2="381.17" y2="176.35" stroke="#222" stroke-width="0.9"/>
<line x1="384.73" y1="175.44" x2="384.18" y2="177.15" stroke="#222" stroke-width="0.9"/>
<line x1="387.81" y1="176.62" x2="387.08" y2="178.27" stroke="#222" stroke-width="0.9"/>
<line x1="390.75" y1="178.12" x2="389.00" y2="181.15" stroke="#222" stroke-width="1.2"/>
<line x1="393.52" y1="179.92" x2="392.46" y2="181.37" stroke="#222" stroke-width="0.9"/>
<line x1="396.08" y1="181.99" x2="394.87" y2="183.33" stroke="#222" stroke-width="0.9"/>
<line x1="398.41" y1="184.32" x2="397.07" y2="185.53" stroke="#222" stroke-width="0.9"/>
<line x1="400.48" y1="186.88" x2="399.03" y2="187.94" stroke="#222" stroke-width="0.9"/>
<line x1="402.28" y1="189.65" x2="399.25" y2="191.40" stroke="#222" stroke-width="1.2"/>
<line x1="403.78" y1="192.59" x2="402.13" y2="193.32" stroke="#222" stroke-width="0.9"/>
<line x1="404.96" y1="195.67" x2="403.25" y2="196.22" stroke="#222" stroke-width="0.9"/>
<line x1="405.81" y1="198.85" x2="404.05" y2="199.23" stroke="#222" stroke-width="0.9"/>
<line x1="406.33" y1="202.11" x2="404.54" y2="202.30" stroke="#222" stroke-width="0.9"/>
<line x1="406.50" y1="205.40" x2="403.00" y2="205.40" stroke="#222" stroke-width="1.2"/>
<line x1="406.33" y1="208.69" x2="404.54" y2="208.50" stroke="#222" stroke-width="0.9"/>
<line x1="405.81" y1="211.95" x2="404.05" y2="211.57" stroke="#222" stroke-width="0.9"/>
<line x1="404.96" y1="215.13" x2="403.25" y2="214.58" stroke="#222" stroke-width="0.9"/>
<line x1="403.78" y1="218.21" x2="402.13" y2="217.48" stroke="#222" stroke-width="0.9"/>
<line x1="402.28" y1="221.15" x2="399.25" y2="219.40" stroke="#222" stroke-width="1.2"/>
<line x1="400.48" y1="223.92" x2="399.03" y2="222.86" stroke="#222" stroke-width="0.9"/>
<line x1="398.41" y1="226.48" x2="397.07" y2="225.27" stroke="#222" stroke-width="0.9"/>
<line x1="396.08" y1="228.81" x2="394.87" y2="227.47" stroke="#222" stroke-width="0.9"/>
<line x1="393.52" y1="230.88" x2="392.46" y2="229.43" stroke="#222" stroke-width="0.9"/>
<line x1="390.75" y1="232.68" x2="389.00" y2="229.65" stroke="#222" stroke-width="1.2"/>
<line x1="387.81" y1="234.18" x2="387.08" y2="232.53" stroke="#222" stroke-width="0.9"/>
<line x1="384.73" y1="235.36" x2="384.18" y2="233.65" stroke="#222" stroke-width="0.9"/>
<line x1="381.55" y1="236.21" x2="381.17" y2="234.45" stroke="#222" stroke-width="0.9"/>
<line x1="378.29" y1="236.73" x2="378.10" y2="234.94" stroke="#222" stroke-width="0.9"/>
<line x1="375.00" y1="236.90" x2="375.00" y2="233.40" stroke="#222" stroke-width="1.2"/>
<line x1="371.71" y1="236.73" x2="371.90" y2="234.94" stroke="#222" stroke-width="0.9"/>
<line x1="368.45" y1="236.21" x2="368.83" y2="234.45" stroke="#222" stroke-width="0.9"/>
<line x1="365.27" y1="235.36" x2="365.82" y2="233.65" stroke="#222" stroke-width="0.9"/>
<line x1="362.19" y1="234.18" x2="362.92" y2="232.53" stroke="#222" stroke-width="0.9"/>
<line x1="359.25" y1="232.68" x2="361.00" y2="229.65" stroke="#222" stroke-width="1.2"/>
<line x1="356.48" y1="230.88" x2="357.54" y2="229.43" stroke="#222" stroke-width="0.9"/>
<line x1="353.92" y1="228.81" x2="355.13" y2="227.47" stroke="#222" stroke-width="0.9"/>
<line x1="351.59" y1="226.48" x2="352.93" y2="225.27" stroke="#222" stroke-width="0.9"/>
<line x1="349.52" y1="223.92" x2="350.97" y2="222.86" stroke="#222" stroke-width="0.9"/>
<line x1="347.72" y1="221.15" x2="350.75" y2="219.40" stroke="#222" stroke-width="1.2"/>
<line x1="346.22" y1="218.21" x2="347.87" y2="217.48" stroke="#222" stroke-width="0.9"/>
<line x1="345.04" y1="215.13" x2="346.75" y2="214.58" stroke="#222" stroke-width="0.9"/>
<line x1="344.19" y1="211.95" x2="345.95" y2="211.57" stroke="#222" stroke-width="0.9"/>
<line x1="343.67" y1="208.69" x2="345.46" y2="208.50" stroke="#222" stroke-width="0.9"/>
<line x1="343.50" y1="205.40" x2="347.00" y2="205.40" stroke="#222" stroke-width="1.2"/>
<line x1="343.67" y1="202.11" x2="345.46" y2="202.30" stroke="#222" stroke-width="0.9"/>
<line x1="344.19" y1="198.85" x2="345.95" y2="199.23" stroke="#222" stroke-width="0.9"/>
<line x1="345.04" y1="195.67" x2="346.75" y2="196.22" stroke="#222" stroke-width="0.9"/>
<line x1="346.22" y1="192.59" x2="347.87" y2="193.32" stroke="#222" stroke-width="0.9"/>
<line x1="347.72" y1="189.65" x2="350.75" y2="191.40" stroke="#222" stroke-width="1.2"/>
<line x1="349.52" y1="186.88" x2="350.97" y2="187.94" stroke="#222" stroke-width="0.9"/>
<line x1="351.59" y1="184.32" x2="352.93" y2="185.53" stroke="#222" stroke-width="0.9"/>
<line x1="353.92" y1="181.99" x2="355.13" y2="183.33" stroke="#222" stroke-width="0.9"/>
<line x1="356.48" y1="179.92" x2="357.54" y2="181.37" stroke="#222" stroke-width="0.9"/>
<line x1="359.25" y1="178.12" x2="361.00" y2="181.15" stroke="#222" stroke-width="1.2"/>
<line x1="362.19" y1="176.62" x2="362.92" y2="178.27" stroke="#222" stroke-width="0.9"/>
<line x1="365.27" y1="175.44" x2="365.82" y2="177.15" stroke="#222" stroke-width="0.9"/>
<line x1="368.45" y1="174.59" x2="368.83" y2="176.35" stroke="#222" stroke-width="0.9"/>
<line x1="371.71" y1="174.07" x2="371.90" y2="175.86" stroke="#222" stroke-width="0.9"/>
<text x="387.10" y="187.14" font-size="7.6" text-anchor="middle" fill="#222" stroke="#222" stroke-width="0.3">1</text>
<text x="395.96" y="196.00" font-size="7.6" text-anchor="middle" fill="#222" stroke="#222" stroke-width="0.3">2</text>
<text x="399.20" y="208.10" font-size="7.6" text-anchor="middle" fill="#222" stroke="#222" stroke-width="0.3">3</text>
<text x="395.96" y="220.20" font-size="7.6" text-anchor="middle" fill="#222" stroke="#222" stroke-width="0.3">4</text>
<text x="387.10" y="229.06" font-size="7.6" text-anchor="middle" fill="#222" stroke="#222" stroke-width="0.3">5</text>
<text x="375.00" y="232.30" font-size="7.6" text-anchor="middle" fill="#222" stroke="#222" stroke-width="0.3">6</text>
<text x="362.90" y="229.06" font-size="7.6" text-anchor="middle" fill="#222" stroke="#222" stroke-width="0.3">7</text>
<text x="354.04" y="220.20" font-size="7.6" text-anchor="middle" fill="#222" stroke="#222" stroke-width="0.3">8</text>
<text x="350.80" y="208.10" font-size="7.6" text-anchor="middle" fill="#222" stroke="#222" stroke-width="0.3">9</text>
<text x="354.04" y="196.00" font-size="7.6" text-anchor="middle" fill="#222" stroke="#222" stroke-width="0.3">10</text>
<text x="362.90" y="187.14" font-size="7.6" text-anchor="middle" fill="#222" stroke="#222" stroke-width="0.3">11</text>
<text x="375.00" y="183.90" font-size="7.6" text-anchor="middle" fill="#222" stroke="#222" stroke-width="0.3">12</text>
<line x1="375" y1="205.4" x2="381" y2="184" stroke="#f02020" stroke-width="1.6"/>
<line x1="375" y1="205.4" x2="376" y2="233" stroke="#f02020" stroke-width="1.6"/>
<polygon points="375.5,190 379,196 376.5,200 372.5,197" fill="#f05050"/><polygon points="373,211 377.5,211 378.5,218 373.5,216" fill="#f05050"/>
<line x1="364.2" y1="216.4" x2="394.7" y2="183.4" stroke="#2a9a40" stroke-width="1.2"/>
<circle cx="375" cy="205.4" r="8.3" fill="rgba(0,0,0,0.25)"/><circle cx="375" cy="205.4" r="6.8" fill="#2a2a2a" fill-opacity="0.85"/><circle cx="375" cy="205.4" r="5" fill="url(#ball)"/>
<g stroke="#1a1a1a" stroke-width="1.05" fill="none" stroke-linecap="square" transform="translate(1.2,0)"><path d="M75.5,256.3 v1.6 M70.2,258.6 h10.3 M70.6,258.6 v4.5 q0,2.8 -2,4 M68,260.6 l1.2,0.9 M68,264.3 l1.3,-0.9 M72.5,260.6 h7 M73.2,260.6 l-0.8,2.2 M79,260.6 l0.8,2.2 M72.5,263 h7.5 M74,263 v3.6 M77.5,263 v3.8 M72,267 l2.2,-1.4 M80,267 l-2.5,-1.6 M74,265 h3.5"/></g>
<polygon points="8.5,78.4 18.6,72.3 23.4,77 13.3,84" fill="#cdc8c2" stroke="#111" stroke-width="1.6" stroke-dasharray="1.4,0.9"/>
<polygon points="8.5,17.2 19,10.5 24,15.5 13.5,22.3" fill="#cdc8c2" stroke="#111" stroke-width="1.6" stroke-dasharray="1.4,0.9"/>
<rect x="675.95" y="67.75" width="19.3" height="19.5" rx="3" fill="url(#wbA)" stroke="#e8f0ff" stroke-width="1.5"/><rect x="680.0" y="80.1" width="7" height="3" fill="#fff"/>
<rect x="698.95" y="67.75" width="19.3" height="19.5" rx="3" fill="url(#wbA)" stroke="#e8f0ff" stroke-width="1.5"/><rect x="703.7" y="72.5" width="10" height="10" fill="none" stroke="#fff" stroke-width="1.3"/><rect x="703.0" y="71.6" width="11.4" height="3" fill="#fff"/>
<rect x="721.75" y="67.75" width="19.3" height="19.5" rx="3" fill="url(#wbX)" stroke="#e8f0ff" stroke-width="1.5"/><path d="M726.2,72 L736.8,82.6 M736.8,72 L726.2,82.6" stroke="#fff" stroke-width="2.1"/>
<rect x="680.55" y="5.55" width="18.5" height="19.0" rx="3" fill="url(#wbI)" stroke="#c9d5f6" stroke-width="1.5"/><rect x="684.5999999999999" y="17.9" width="7" height="3" fill="#fff"/>
<rect x="703.15" y="5.55" width="18.5" height="19.0" rx="3" fill="url(#wbI)" stroke="#c9d5f6" stroke-width="1.5"/><rect x="707.9" y="10.3" width="10" height="10" fill="none" stroke="#fff" stroke-width="1.3"/><rect x="707.1999999999999" y="9.399999999999999" width="11.4" height="3" fill="#fff"/>
<rect x="726.25" y="5.55" width="18.5" height="19.0" rx="3" fill="url(#wbIX)" stroke="#c9d5f6" stroke-width="1.5"/><path d="M730.7,9.8 L741.3,20.4 M741.3,9.8 L730.7,20.4" stroke="#fff" stroke-width="2.1"/>
<text x="43.28" y="254.40" font-size="10.2" text-anchor="middle" fill="#111" stroke="#111" stroke-width="0.25">40</text>
<text x="32.37" y="232.53" font-size="10.2" text-anchor="middle" fill="#111" stroke="#111" stroke-width="0.25">60</text>
<text x="36.83" y="208.51" font-size="10.2" text-anchor="middle" fill="#111" stroke="#111" stroke-width="0.25">80</text>
<text x="54.84" y="192.00" font-size="10.2" text-anchor="middle" fill="#111" stroke="#111" stroke-width="0.25">100</text>
<text x="79.16" y="189.66" font-size="10.2" text-anchor="middle" fill="#111" stroke="#111" stroke-width="0.25">120</text>
<text x="99.99" y="202.42" font-size="10.2" text-anchor="middle" fill="#111" stroke="#111" stroke-width="0.25">140</text>
<text x="653.70" y="200.87" font-size="10.2" text-anchor="middle" fill="#111" stroke="#111" stroke-width="0.25">0</text>
<text x="680.00" y="189.97" font-size="10.2" text-anchor="middle" fill="#111" stroke="#111" stroke-width="0.25">25</text>
<text x="706.30" y="200.87" font-size="10.2" text-anchor="middle" fill="#111" stroke="#111" stroke-width="0.25">50</text>
<text x="717.20" y="227.17" font-size="10.2" text-anchor="middle" fill="#111" stroke="#111" stroke-width="0.25">75</text>
<text x="706.30" y="253.48" font-size="10.2" text-anchor="middle" fill="#111" stroke="#111" stroke-width="0.25">100</text>
<text x="188.70" y="406.26" font-size="13.5" text-anchor="middle" fill="#111" stroke="#111" stroke-width="0.25">0</text>
<text x="167.49" y="366.58" font-size="13.5" text-anchor="middle" fill="#111" stroke="#111" stroke-width="0.25">1</text>
<text x="171.90" y="321.80" font-size="13.5" text-anchor="middle" fill="#111" stroke="#111" stroke-width="0.25">2</text>
<text x="200.44" y="287.02" font-size="13.5" text-anchor="middle" fill="#111" stroke="#111" stroke-width="0.25">3</text>
<text x="243.50" y="273.96" font-size="13.5" text-anchor="middle" fill="#111" stroke="#111" stroke-width="0.25">4</text>
<text x="286.56" y="287.02" font-size="13.5" text-anchor="middle" fill="#111" stroke="#111" stroke-width="0.25">5</text>
<text x="315.10" y="321.80" font-size="13.5" text-anchor="middle" fill="#111" stroke="#111" stroke-width="0.25">6</text>
<text x="319.51" y="366.58" font-size="13.5" text-anchor="middle" fill="#111" stroke="#111" stroke-width="0.25">7</text>
<text x="298.30" y="406.26" font-size="13.5" text-anchor="middle" fill="#111" stroke="#111" stroke-width="0.25">8</text>
<text x="451.90" y="406.26" font-size="13.5" text-anchor="middle" fill="#111" stroke="#111" stroke-width="0.25">0</text>
<text x="430.15" y="339.34" font-size="13.5" text-anchor="middle" fill="#111" stroke="#111" stroke-width="0.25">50</text>
<text x="471.52" y="282.41" font-size="13.5" text-anchor="middle" fill="#111" stroke="#111" stroke-width="0.25">100</text>
<text x="541.88" y="282.41" font-size="13.5" text-anchor="middle" fill="#111" stroke="#111" stroke-width="0.25">150</text>
<text x="583.25" y="339.34" font-size="13.5" text-anchor="middle" fill="#111" stroke="#111" stroke-width="0.25">200</text>
<text x="561.50" y="406.26" font-size="13.5" text-anchor="middle" fill="#111" stroke="#111" stroke-width="0.25">250</text>
</svg>
</body></html>
